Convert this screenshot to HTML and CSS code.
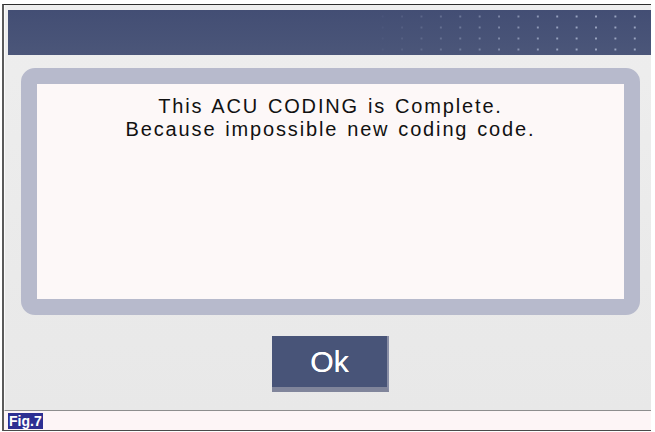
FILE: index.html
```html
<!DOCTYPE html>
<html lang="en">
<head>
  <meta charset="UTF-8" />
  <meta name="viewport" content="width=device-width, initial-scale=1.0" />
  <title>ACU Coding</title>
  <link rel="stylesheet" href="styles.css">
</head>
<body>

  <div class="frame">
    <div class="screen">
      <div class="titlebar"><div class="dots"></div></div>

      <div class="content">
        <div class="panel">
          <div class="message">
            This ACU CODING is Complete.<br>
            Because impossible new coding code.
          </div>
        </div>

        <button class="ok">Ok</button>
      </div>
    </div>

    <div class="footer">
      <span class="fig">Fig.7</span>
    </div>
  </div>

</body>
</html>
```

FILE: styles.css
```css
body {
  margin: 0;
  background: #fff;
  font-family: "Liberation Sans", Arial, sans-serif;
}
.frame {
  margin: 4px 0 0 2px;
  width: 647px;
  height: 425px;
  border-top: 1px solid #2e2e2e;
  border-left: 2px solid #5a5a5a;
  border-bottom: 1px solid #4a4a4a;
  display: flex;
  flex-direction: column;
}
.screen {
  flex: 1;
  background: linear-gradient(#eeeeee, #e8e8e8);
  border-bottom: 1px solid #8e8e8e;
  border-left: 1px solid #fafafa;
  padding: 5px 0 0 3px;
}
.titlebar {
  height: 45px;
  background: linear-gradient(#434e74, #4b5679);
  position: relative;
}
.dots {
  position: absolute;
  left: 360px;
  right: 0;
  top: 0;
  bottom: 0;
  background-image: radial-gradient(circle, rgba(190,200,225,0.7) 0.9px, transparent 1.3px);
  background-size: 19.4px 11px;
  background-position: 5px 1px;
  -webkit-mask-image: linear-gradient(to right, transparent, #000 70%);
  mask-image: linear-gradient(to right, transparent, #000 70%);
}
.content {
  width: 619px;
  margin-left: 13px;
  display: flex;
  flex-direction: column;
  align-items: center;
}
.panel {
  margin-top: 13px;
  width: 619px;
  height: 247px;
  box-sizing: border-box;
  border: 16px solid #b7bacc;
  border-radius: 14px;
  background: #fdf8f8;
}
.message {
  margin-top: 11px;
  text-align: center;
  font-size: 20px;
  line-height: 23px;
  color: #111;
  letter-spacing: 1.85px;
  word-spacing: 1.5px;
}
.ok {
  margin-top: 21px;
  width: 117px;
  height: 56px;
  border: none;
  border-right: 2px solid #8a8fa6;
  border-bottom: 5px solid #80859b;
  background: #485478;
  color: #fff;
  font-family: "Liberation Sans", Arial, sans-serif;
  font-size: 30px;
  text-shadow: 0 0 0.6px #fff;
  padding: 0;
  cursor: pointer;
}
.footer {
  height: 19px;
  background: #fdf5f6;
  padding: 1px 0 0 4px;
  box-sizing: border-box;
}
.fig {
  display: inline-block;
  background: #2d2f92;
  color: #fff;
  font-weight: bold;
  font-size: 14px;
  line-height: 16px;
  padding: 0 1px 0 1px;
}
```
